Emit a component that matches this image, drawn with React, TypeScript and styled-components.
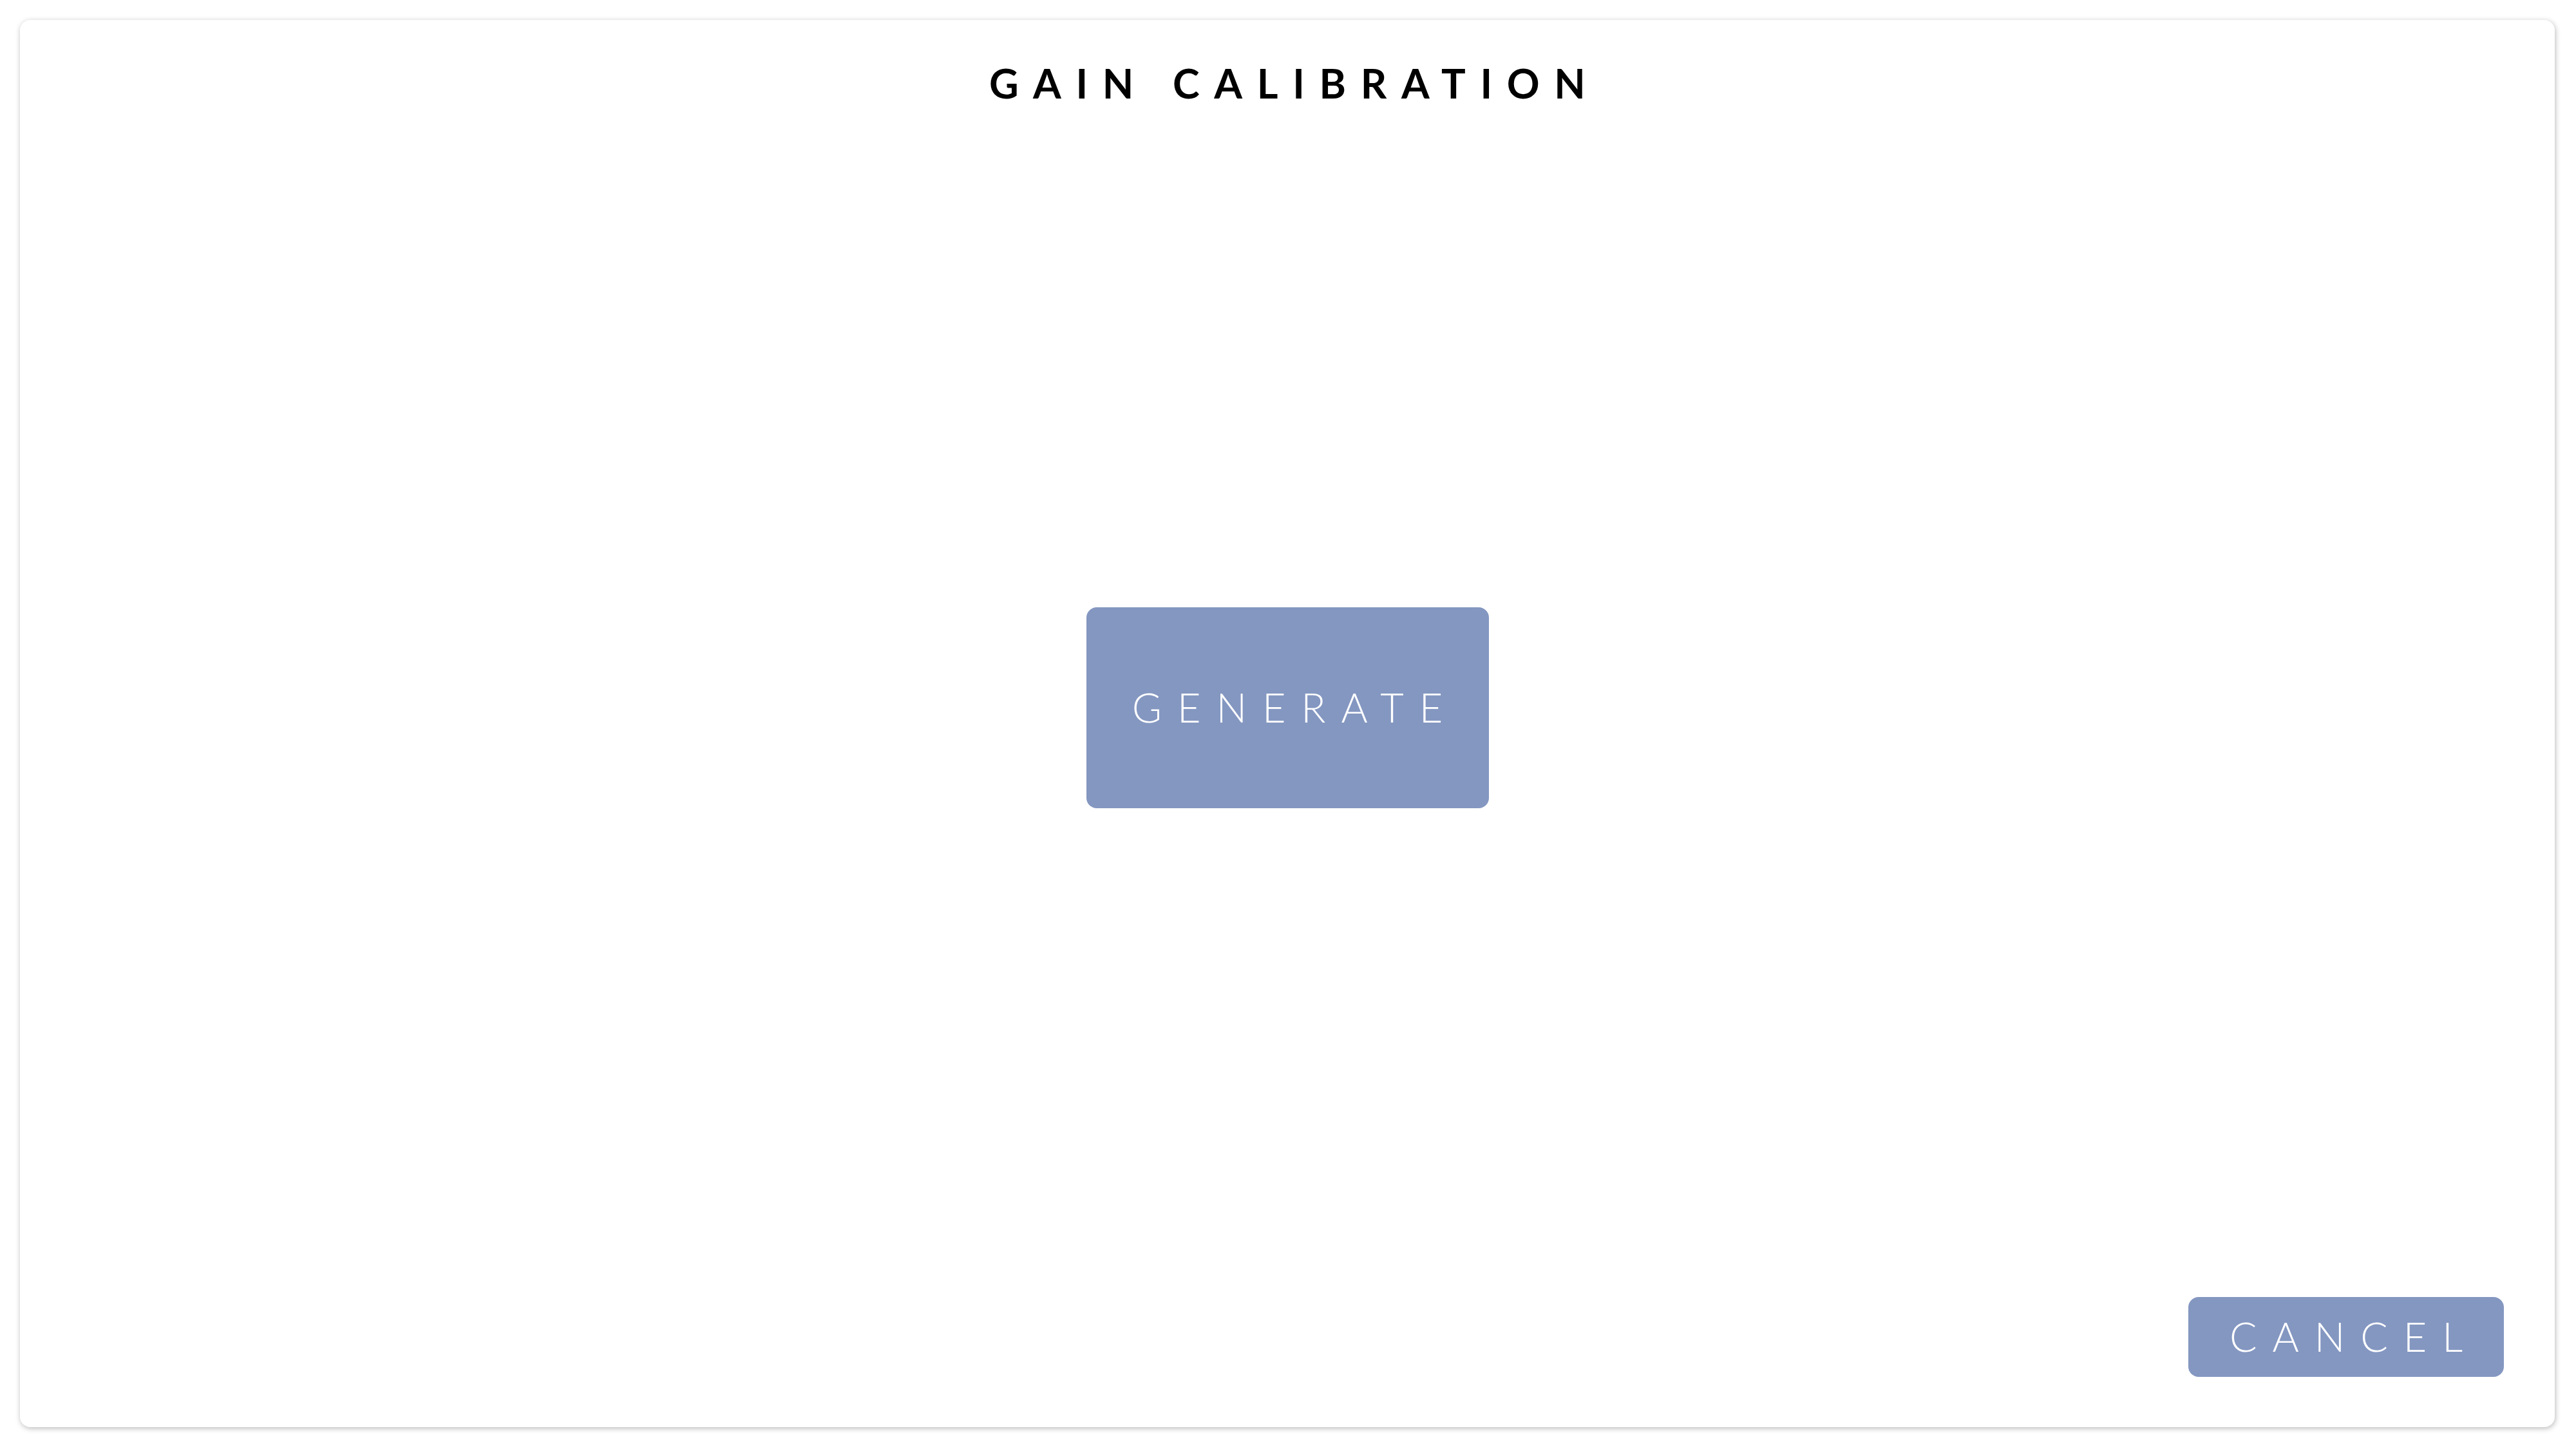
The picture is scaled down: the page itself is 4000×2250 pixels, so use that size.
import { FunctionComponent } from "react";
import styled, { createGlobalStyle } from "styled-components";

const GlobalStyle = createGlobalStyle`
  html, body {
    margin: 0;
    padding: 0;
    background: #ffffff;
  }
  body {
    font-family: "Lato", "Liberation Sans", sans-serif;
  }
`;

const Page = styled.div`
  width: 4000px;
  height: 2250px;
  padding: 31px 33px 34px 31px;
  box-sizing: border-box;
  display: flex;
  background: #ffffff;
`;

const Card = styled.section`
  flex: 1;
  display: flex;
  flex-direction: column;
  background: #ffffff;
  border-radius: 16px;
  box-shadow: 1px 2px 9px rgba(0, 0, 0, 0.28);
`;

const Title = styled.h1`
  margin: 0;
  padding-top: 66px;
  font-size: 63px;
  line-height: 1;
  font-weight: 700;
  color: #000000;
  text-align: center;
  letter-spacing: 0.36em;
  text-indent: 0.36em;
`;

const Body = styled.div`
  flex: 1;
  display: flex;
  align-items: center;
  justify-content: center;
  padding-top: 24px;
`;

const Footer = styled.div`
  display: flex;
  justify-content: flex-end;
  padding: 0 79px 78px 0;
`;

const ActionButton = styled.button<{ $w: number; $h: number }>`
  width: ${(p) => p.$w}px;
  height: ${(p) => p.$h}px;
  display: flex;
  align-items: center;
  justify-content: center;
  border: none;
  border-radius: 16px;
  background: #8497c1;
  color: #ffffff;
  font-family: "Lato", "Liberation Sans", sans-serif;
  font-size: 63px;
  font-weight: 300;
  line-height: 1;
  letter-spacing: 0.38em;
  padding: 0 0 4px 0.38em;
  cursor: pointer;
`;

const App: FunctionComponent = () => {
  return (
    <>
      <GlobalStyle />
      <Page>
        <Card>
          <Title>GAIN CALIBRATION</Title>
          <Body>
            <ActionButton $w={625} $h={312}>
              GENERATE
            </ActionButton>
          </Body>
          <Footer>
            <ActionButton $w={490} $h={124}>
              CANCEL
            </ActionButton>
          </Footer>
        </Card>
      </Page>
    </>
  );
};

export default App;
